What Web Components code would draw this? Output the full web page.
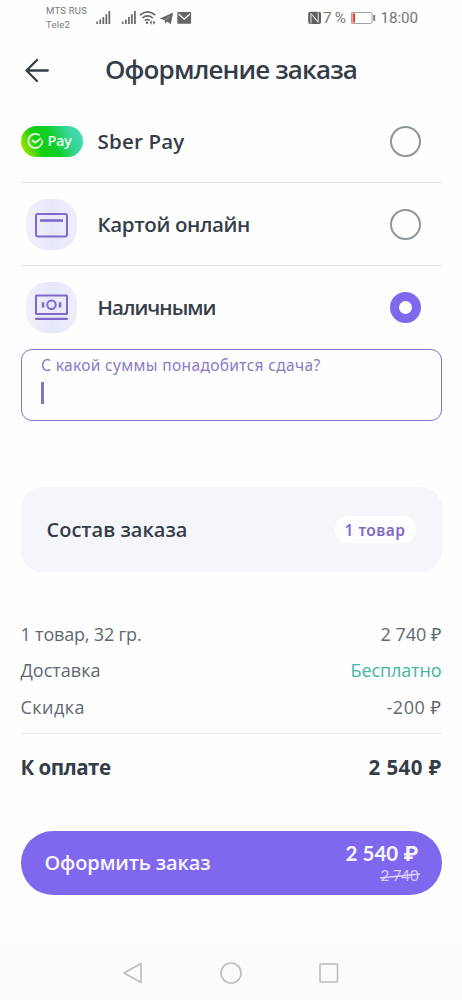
<!DOCTYPE html>
<html lang="ru">
<head>
<meta charset="utf-8">
<title>Оформление заказа</title>
<style>
html,body{margin:0;padding:0;background:#fefefe}
body{width:462px;height:1000px;overflow:hidden;font-family:"Open Sans","Noto Sans",sans-serif;color:#343d48}
</style>
</head>
<body>
<checkout-page></checkout-page>
<script>
const define = (name, html, after) => customElements.define(name, class extends HTMLElement {
  connectedCallback() {
    if (this.shadowRoot) return;
    const t = document.createElement('template');
    t.innerHTML = html;
    this.attachShadow({mode: 'open'}).append(t.content.cloneNode(true));
    if (after) after.call(this, this.shadowRoot);
  }
});

// One line of text tracked to fill the width given in "w"
define('fit-text', `<style>:host{display:block;flex:none;white-space:pre}span{display:inline-block}</style><span><slot></slot></span>`, function (root) {
  const span = root.querySelector('span'), w = +this.getAttribute('w');
  const fit = () => {
    span.style.letterSpacing = '0px';
    const text = root.querySelector('slot').assignedNodes({flatten: true}).map(n => n.textContent).join('');
    const natural = span.getBoundingClientRect().width;
    if (text.length && natural) span.style.letterSpacing = (w - natural) / text.length + 'px';
  };
  fit();
  queueMicrotask(fit);
  this.style.width = w + 'px';
});

define('status-bar', `<style>
:host{display:flex;height:36px;box-sizing:border-box;padding:0 44px 0 46px;color:#777;font-family:Roboto,sans-serif;align-items:center;justify-content:space-between}
.l,.r{display:flex;align-items:center}
.ops{font-size:9.5px;line-height:14px;width:41px;margin-right:9px}
.r{font-size:15.2px;color:#757575}
svg{display:block;flex:none}
</style>
<div class="l"><div class="ops"><fit-text w="41">MTS RUS</fit-text><fit-text w="24">Tele2</fit-text></div>
<svg width="97" height="18" viewBox="96 9 97 18" fill="#666">
<g id="s"><path d="M96.3 21.5h1.6V24h-1.6zM99.4 19.5h1.7V24h-1.7zM102.5 17h1.7v7h-1.7zM105.5 14.2h1.7V24h-1.7zM108.5 11h1.7v13h-1.7z"/></g>
<use href="#s" x="25.6"/>
<g fill="none" stroke="#666" stroke-width="1.6"><path d="M139.8 15.2q7.8-6.6 15.6 0"/><path d="M142.3 18q5.3-4.4 10.6 0"/><path d="M144.8 20.6q2.8-2.1 5.2-.2"/></g><circle cx="147" cy="22.8" r="1.2"/><path d="M151.7 20.3l-2 2.2 2 2.2zM153.2 20.3l2.2 2.2-2.2 2.2z"/>
<path d="M160 18.600L173.200 12.600 170.800 24.200 167.200 21.600 165.200 23.500 164.700 20.300z"/><path d="M165 20.200L169.500 16.300" stroke="#fefefe" stroke-width=".5"/>
<path fill-rule="evenodd" d="M178 12h12.4q.7 0 .7.7V23q0 .8-.7.8H178q-.7 0-.7-.8V12.700q0-.7.7-.7zM178.600 13.300l5.6 5 5.6-5v1.700l-5.6 4.900-5.6-4.900z"/>
</svg></div>
<div class="r"><svg width="15" height="14" viewBox="0 0 15 14"><rect x="1.200" y=".8" width="12.800" height="12.200" rx="2" fill="#606060"/><path d="M4 12.500V2.500L9.300 9.300M6 4.600L11.200 11.300V1.300" fill="none" stroke="#f4f4f4" stroke-width=".9"/></svg>
<fit-text w="22.500" style="margin-left:1.500px">7 %</fit-text>
<svg width="26" height="14" viewBox="0 0 26 14" style="margin:0 5px 0 4px"><rect x="1.500" y="1.500" width="20.500" height="11" rx="1.500" fill="#fff" stroke="#a5a5a5"/><path d="M2 1.500V12.500" stroke="#e58a82" stroke-width="1.500"/><path d="M3.200 2.500H5V11.500H3.200z" fill="#e5322b"/><path d="M24.200 4V10" stroke="#777" stroke-width="1.800"/></svg>
<fit-text w="37.500">18:00</fit-text></div>`);

define('page-header', `<style>
:host{display:flex;height:70px;padding-left:25px;box-sizing:border-box}
svg{margin-top:22px}fit-text{margin:14px 0 0 55px;font-size:26px;line-height:38px;font-weight:600}
</style><svg width="25" height="25" viewBox="0 0 25 25" fill="none" stroke="#343d48" stroke-width="2.300" stroke-linecap="round" stroke-linejoin="round"><path d="M22.800 12.500H1.500M12 2L1.500 12.500 12 23"/></svg>
<fit-text w="252"><slot></slot></fit-text>`);

define('pay-option', `<style>
:host{display:flex;height:83px;box-sizing:border-box;align-items:center;padding-right:21px;border-bottom:1.500px solid #dcdee1;font-size:20.500px;font-weight:600;line-height:28px}
:host([last]){border-color:transparent}
.i{width:62px;margin-right:15px;display:flex;justify-content:center;flex:none}
.t{flex:1}
.r{width:31px;height:31px;border-radius:50%;box-sizing:border-box;border:2.500px solid #8e959d}
:host([checked]) .r{border:9.300px solid #8068ee}
</style><div class="i"><slot name="icon"></slot></div><div class="t"><slot></slot></div><div class="r"></div>`);

define('sber-badge', `<style>
:host{display:flex;width:62px;height:31px;border-radius:16px;align-items:center;box-sizing:border-box;padding-left:6px;color:#eafff0;font:600 14.500px/20px "Open Sans",sans-serif;background:linear-gradient(65deg,#d9ee00 0%,#7fe000 12%,#14cf10 30%,#10cf2a 52%,#35d597 75%,#4fdcc0 100%)}
svg{margin-right:4px}fit-text{margin-top:-1px}
</style><svg width="17" height="17" viewBox="0 0 17 17" fill="none" stroke="#e4ffe2" stroke-width="1.800"><path d="M12.800 2.600A7 7 0 1 0 15.300 7.300M4.900 7.200L8.200 9.700 14.300 5.200"/></svg><fit-text w="24">Pay</fit-text>`);

define('soft-icon', `<style>:host{display:flex;width:51px;height:51px;border-radius:21px;align-items:center;justify-content:center;background:linear-gradient(90deg,#f1f1fc,#e6e7fa 50%,#eeeefc)}svg{display:block}</style>
<svg width="33" height="29" viewBox="0 0 33 29" fill="none" stroke="#8068cf" stroke-width="2"></svg>`, function (root) {
  root.querySelector('svg').innerHTML = this.getAttribute('kind') === 'card'
    ? '<rect x="1" y="4" width="31" height="22.500" rx="2"/><path d="M5 10.500H28" stroke-width="2.600"/>'
    : '<rect x="1" y="2.500" width="31" height="18.500" rx=".5"/><circle cx="16.500" cy="11.800" r="4.200"/><path d="M8 9.200V14.400M25 9.200V14.400" stroke-width="2.500"/><path d="M1 25.800H32" stroke-width="2.300" stroke-linecap="round"/>';
});

define('change-field', `<style>
:host{display:block;height:72px;box-sizing:border-box;border:1.500px solid #8574c4;border-radius:11px;padding:5px 0 0 19.500px;color:#8a7bc6;font:400 15.500px/20px "Noto Sans",sans-serif}
i{display:block;width:2.600px;height:22px;background:#8272c6;margin-top:7px}
</style><fit-text w="279.500"><slot></slot></fit-text><i></i>`);

define('order-card', `<style>
:host{display:flex;height:85px;box-sizing:border-box;margin-top:66px;border-radius:21px;background:#f5f6fa;padding:0 26px;align-items:center;justify-content:space-between;font-size:20px;font-weight:600}
.c{background:#fff;height:27px;width:81px;border-radius:14px;display:flex;align-items:center;justify-content:center;color:#8068ca;font:600 15.500px/20px "Noto Sans",sans-serif}
</style><slot></slot><div class="c"><slot name="count"></slot></div>`);

define('sum-row', `<style>
:host{display:flex;height:36.500px;align-items:center;justify-content:space-between;font-size:18px;color:#5f6871;line-height:26px}
:host([total]){height:67px;border-top:1px solid #e9ebee;font-size:20.500px;font-weight:700;color:#343d48;margin-top:7.500px}
</style><slot></slot>`);

define('submit-button', `<style>
:host{display:flex;height:64px;border-radius:32px;background:#8068ee;color:#f8f6ff;padding:0 23px 0 24px;align-items:center;justify-content:space-between;font-size:20px;line-height:26px;font-weight:600}
.p{display:flex;flex-direction:column;align-items:flex-end;font:700 20.500px/22px Lato,Inter,sans-serif}
.o{position:relative;font-size:15px;line-height:15px;font-weight:400;color:#d5ccfb;margin:4px 0 0}
svg{position:absolute;left:-1px;top:5px}
</style><slot></slot><div class="p"><slot name="price"></slot><div class="o"><slot name="old"></slot><svg width="40" height="6"><path d="M0 5L40 1" stroke="#ddd5fc" stroke-width="1.300"/></svg></div></div>`);

define('nav-bar', `<style>:host{display:flex;height:54px;background:#fbfbfb;align-items:center;justify-content:center;gap:76px;padding-right:1px}svg{display:block}</style>
<svg width="22" height="22" viewBox="0 0 22 22" fill="none" stroke="#bcbcbc" stroke-width="1.600" stroke-linejoin="round"><path d="M19 1.500V20.500L2 11z"/></svg>
<svg width="22" height="22" viewBox="0 0 22 22" fill="none" stroke="#bcbcbc" stroke-width="1.600"><circle cx="11" cy="11" r="10"/></svg>
<svg width="22" height="22" viewBox="0 0 22 22" fill="none" stroke="#bcbcbc" stroke-width="1.600"><rect x="2" y="2" width="17.500" height="18" rx=".8"/></svg>`);

define('checkout-page', `<style>
:host{display:flex;flex-direction:column;height:1000px;width:462px}
main{padding:0 20.500px;flex:1;display:flex;flex-direction:column;margin-top:-6px}
main>*{flex:none}
.sums{margin-top:43.500px}
.g{color:#43b5a3}
submit-button{margin-top:30px}
</style>
<status-bar></status-bar>
<page-header>Оформление заказа</page-header>
<main>
<pay-option><sber-badge slot="icon"></sber-badge><fit-text w="87">Sber Pay</fit-text></pay-option>
<pay-option><soft-icon slot="icon" kind="card"></soft-icon><fit-text w="152.500">Картой онлайн</fit-text></pay-option>
<pay-option last checked><soft-icon slot="icon" kind="cash"></soft-icon><fit-text w="118">Наличными</fit-text></pay-option>
<change-field>С какой суммы понадобится сдача?</change-field>
<order-card><fit-text w="141">Состав заказа</fit-text><fit-text slot="count" w="61">1 товар</fit-text></order-card>
<div class="sums">
<sum-row><fit-text w="121">1 товар, 32 гр.</fit-text><fit-text w="61">2 740 ₽</fit-text></sum-row>
<sum-row><fit-text w="80">Доставка</fit-text><fit-text class="g" w="91">Бесплатно</fit-text></sum-row>
<sum-row><fit-text w="64.500">Скидка</fit-text><fit-text w="55">-200 ₽</fit-text></sum-row>
<sum-row total><fit-text w="90">К оплате</fit-text><fit-text w="73">2 540 ₽</fit-text></sum-row>
</div>
<submit-button><fit-text w="166">Оформить заказ</fit-text><fit-text slot="price" w="73">2 540 ₽</fit-text><fit-text slot="old" w="38">2 740</fit-text></submit-button>
</main>
<nav-bar></nav-bar>`);
</script>
</body>
</html>
